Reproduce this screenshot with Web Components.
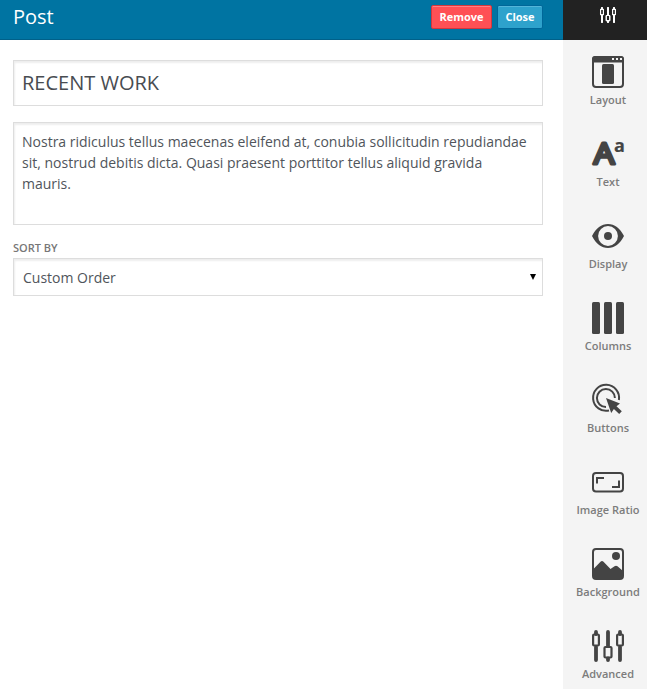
<!DOCTYPE html>
<html lang="en">
<head>
<meta charset="utf-8">
<title>Post</title>
<style>
html, body { margin: 0; height: 100%; }
body { background: #fff; font-family: "Open Sans", "Noto Sans", sans-serif; overflow: hidden; }
</style>
</head>
<body>
<post-editor></post-editor>
<script>
const define = (name, html) => customElements.define(name, class extends HTMLElement {
  constructor() {
    super();
    const t = document.createElement('template');
    t.innerHTML = html;
    this.attachShadow({ mode: 'open' }).append(t.content.cloneNode(true));
  }
});

const sliders = `<g fill="none" stroke="currentColor" stroke-linecap="round">
  <path stroke-width="3.8" d="M4 2V4M4 17V30M16 2V16M16 28.500V30M28 2V4M28 17V30"/>
  <path stroke-width="2.200" d="M1.100 5.500q0-1 1-1h3.800q1 0 1 1v9q0 1-1 1h-3.800q-1 0-1-1zM12.500 18q0-1 1-1h5q1 0 1 1v8.500q0 1-1 1h-5q-1 0-1-1zM25.100 5.500q0-1 1-1h3.800q1 0 1 1v9q0 1-1 1h-3.800q-1 0-1-1z"/></g>`;

const icons = {
  sliders,
  layout: `<rect x="1" y="1" width="30" height="30" rx="3" fill="none" stroke="currentColor" stroke-width="2"/>
    <path fill="currentColor" d="M3 0h26q3 0 3 3v3.500H0V3q0-3 3-3z"/><rect x="10" y="8" width="12" height="20" rx="1.500" fill="currentColor"/>
    <path fill="#f4f4f4" d="M20 2h2v2h-2zM24 2h2v2h-2zM28 2h2v2h-2z"/>`,
  text: `<g fill="currentColor" stroke="currentColor" stroke-linejoin="round" font-family="Open Sans">
    <text x="1.700" y="26.400" font-size="29" font-weight="400" stroke-width="3.200" textLength="20.600" lengthAdjust="spacingAndGlyphs">A</text>
    <text x="22" y="14" font-size="18" font-weight="700" stroke-width=".2">a</text></g>`,
  display: `<path fill="currentColor" fill-rule="evenodd" d="M0 16C4 8 9.500 4 16 4s12 4 16 12c-4 8-9.500 12-16 12S4 24 0 16zM16 6.100a9.900 9.900 0 1 0 0 19.800a9.900 9.900 0 1 0 0-19.800z"/>
    <circle cx="16" cy="16" r="4" fill="currentColor"/>`,
  columns: `<g fill="currentColor"><rect width="8" height="32" rx="1.500"/><rect x="12" width="8" height="32" rx="1.500"/><rect x="24" width="8" height="32" rx="1.500"/></g>`,
  buttons: `<g fill="none" stroke="currentColor" stroke-width="2"><path d="M17 26.500A13 13 0 1 1 26.900 16"/><path d="M14 23A9 9 0 1 1 22.900 14"/></g>
    <path fill="currentColor" d="M14 14l14 5.500-3.500 2.700 5.300 5-2.600 2.800-5.300-5.100-2.700 4z"/>`,
  ratio: `<rect x="1" y="7" width="30" height="18.400" rx="3" fill="none" stroke="currentColor" stroke-width="2"/>
    <path fill="none" stroke="currentColor" stroke-width="2" d="M5 17.500V12h7M27 14.500v6.500h-7"/>`,
  background: `<rect x="1" y="1" width="30" height="30" rx="3" fill="none" stroke="currentColor" stroke-width="2"/>
    <path fill="currentColor" d="M1 21.500L8.500 13.700q1.500-1.300 3 0L18.500 21 22.500 18.200q1.500-1 3 0L31 23v6q0 2-2 2H3q-2 0-2-2z"/><circle cx="24" cy="8" r="4" fill="currentColor"/>`
};

customElements.define('tool-icon', class extends HTMLElement {
  constructor() { super(); this.attachShadow({ mode: 'open' }); }
  connectedCallback() {
    this.shadowRoot.innerHTML = `<style>:host{display:block;width:32px;height:32px}svg{display:block;width:100%;height:100%;overflow:visible}</style>
      <svg viewBox="0 0 32 32">${icons[this.getAttribute('name')]}</svg>`;
  }
});

define('tool-item', `<style>
  :host{display:flex;flex-direction:column;align-items:center;height:82px;color:#444}
  .label{margin-top:4px;font-size:11px;line-height:16px;font-weight:600;color:#7c7c7c;white-space:nowrap}
  </style><slot name="icon"></slot><div class="label"><slot></slot></div>`);

define('tool-bar', `<style>
  :host{display:flex;flex-direction:column;width:84px;background:#f4f4f4}
  .top{flex:none;height:40px;background:#222;color:#fff;display:flex;justify-content:center;box-sizing:border-box;padding:7px 0 0 6px}
  .top tool-icon{width:16px;height:16px;filter:drop-shadow(0 0 .3px #fff)}
  .items{flex:none;padding:16px 0 0 6px}
  </style><div class="top"><tool-icon name="sliders"></tool-icon></div><div class="items"><slot></slot></div>`);

define('action-button', `<style>
  :host{display:block;box-sizing:border-box;height:24px;border:1px solid #006799;border-radius:2px;background:#2ea2cc;
    box-shadow:inset 0 1px 0 rgba(120,200,230,.5);color:#fff;font-size:11px;line-height:22px;font-weight:700;text-align:center;width:46px}
  :host([kind=remove]){background:#ff5055;border-color:#d5363c;box-shadow:inset 0 1px 0 #ff7f83;width:61px}
  </style><slot></slot>`);

define('panel-header', `<style>
  :host{display:flex;align-items:flex-start;box-sizing:border-box;height:40px;padding:5px 20px 0 13px;background:#0074a2;border-bottom:1px solid #006089;color:#fff}
  .title{flex:1;font-size:20px;line-height:24px}
  .actions{display:flex;gap:5px}
  </style><div class="title"><slot></slot></div><div class="actions"><slot name="actions"></slot></div>`);

define('form-field', `<style>
  :host{display:block}
  .label{font-size:11px;line-height:16px;font-weight:600;color:#777;height:18px}
  .box{box-sizing:border-box;border:1px solid #ddd;box-shadow:inset 1px 2px 2px rgba(0,0,0,.07);color:#50555b;background:#fff;display:flex;justify-content:space-between}
  :host([kind=title]) .box{height:46px;padding:0 8px;font-size:20px;line-height:44px;color:#484c51}
  :host([kind=body]) .box{height:103px;padding:8px 8px;font-size:14px;line-height:21px}
  :host([kind=select]) .box{height:38px;padding:0 6px 0 9px;font-size:14px;line-height:37px}
  .arrow,.label{display:none}
  :host([kind=select]) .label{display:block}
  :host([kind=select]) .arrow{display:block;width:6px;height:6px;margin-top:15px}
  </style><div class="label"><slot name="label"></slot></div><div class="box"><div><slot></slot></div>
  <svg class="arrow" viewBox="0 0 6 6"><path d="M0 0h6L3 6z"/></svg></div>`);

define('post-editor', `<style>
  :host{display:flex;height:689px;width:647px}
  .main{flex:1;min-width:0}
  .form{padding:20px 20px 0 13px;display:flex;flex-direction:column;gap:16px}
  form-field[kind=select]{margin-top:-1px}
  </style>
  <div class="main">
    <panel-header>Post<action-button slot="actions" kind="remove">Remove</action-button><action-button slot="actions">Close</action-button></panel-header>
    <div class="form">
      <form-field kind="title">RECENT WORK</form-field>
      <form-field kind="body">Nostra ridiculus tellus maecenas eleifend at, conubia sollicitudin repudiandae sit, nostrud debitis dicta. Quasi praesent porttitor tellus aliquid gravida mauris.</form-field>
      <form-field kind="select"><span slot="label">SORT BY</span>Custom Order</form-field>
    </div>
  </div>
  <tool-bar>
    <tool-item><tool-icon slot="icon" name="layout"></tool-icon>Layout</tool-item>
    <tool-item><tool-icon slot="icon" name="text"></tool-icon>Text</tool-item>
    <tool-item><tool-icon slot="icon" name="display"></tool-icon>Display</tool-item>
    <tool-item><tool-icon slot="icon" name="columns"></tool-icon>Columns</tool-item>
    <tool-item><tool-icon slot="icon" name="buttons"></tool-icon>Buttons</tool-item>
    <tool-item><tool-icon slot="icon" name="ratio"></tool-icon>Image Ratio</tool-item>
    <tool-item><tool-icon slot="icon" name="background"></tool-icon>Background</tool-item>
    <tool-item><tool-icon slot="icon" name="sliders"></tool-icon>Advanced</tool-item>
  </tool-bar>`);
</script>
</body>
</html>
